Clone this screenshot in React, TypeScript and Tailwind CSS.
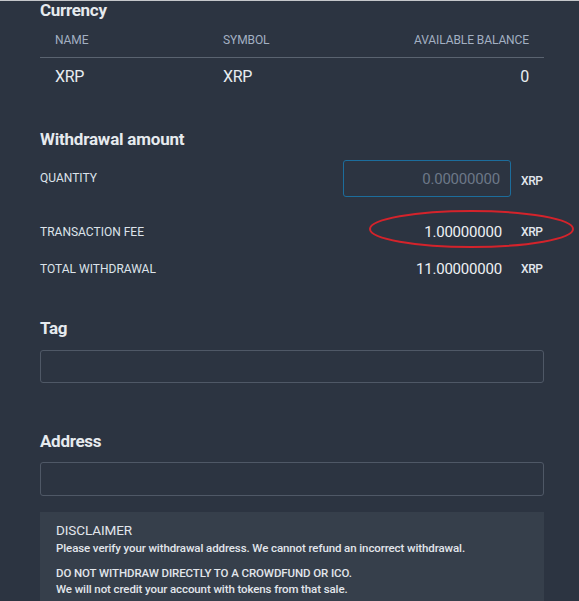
import React from "react";

const font = { fontFamily: "Roboto, 'Noto Sans', sans-serif" };

function AmountRow({ label, value }: { label: string; value: string }) {
  return (
    <div className="flex items-center">
      <span className="flex-1 text-[12px] text-[#dde3ea]">{label}</span>
      <span className="pr-[9px] text-[15px] tracking-[-0.2px] text-[#eef1f4]">{value}</span>
      <span className="w-[33px] pl-[10px] text-[12px] font-medium tracking-[-0.4px] text-[#e2e7ec]">XRP</span>
    </div>
  );
}

export default function App() {
  return (
    <div className="h-[601px] w-[579px] overflow-hidden border-t border-[#c5c7ca] bg-[#2c3441]" style={font}>
      <div className="pl-10 pr-[35px]">
        {/* currency table */}
        <h2 className="mt-[-1px] text-[17px] font-bold leading-5 tracking-[-0.3px] text-[#e6eaee]">Currency</h2>
        <div className="mt-[12px] flex border-b border-[#5a6370] px-[15px] pb-[9px] text-[12px] leading-4 tracking-[-0.1px] text-[#a3b0c2]">
          <span className="w-[168px]">NAME</span>
          <span className="flex-1">SYMBOL</span>
          <span>AVAILABLE BALANCE</span>
        </div>
        <div className="flex px-[15px] pt-[9px] text-[16px] leading-5 tracking-[-0.3px] text-[#e8ecf0]">
          <span className="w-[168px]">XRP</span>
          <span className="flex-1">XRP</span>
          <span>0</span>
        </div>

        {/* withdrawal amount */}
        <h2 className="mt-[42px] text-[17px] font-bold leading-5 tracking-[-0.2px] text-[#e6eaee]">Withdrawal amount</h2>
        <div className="mt-[11px] flex items-center">
          <span className="flex-1 self-start pt-[9px] text-[12px] text-[#dde3ea]">QUANTITY</span>
          <input
            readOnly
            placeholder="0.00000000"
            className="h-[37px] w-[168px] rounded-[3px] border border-[#1c6d9c] bg-transparent pl-2 pr-[10px] text-right text-[15px] tracking-[-0.2px] text-[#e8ecf0] outline-none placeholder:text-[#6c7888]"
          />
          <span className="w-[33px] pl-[10px] pt-[4px] text-[12px] font-medium tracking-[-0.4px] text-[#e2e7ec]">XRP</span>
        </div>
        <div className="relative mt-[24px]">
          <AmountRow label="TRANSACTION FEE" value="1.00000000" />
          {/* hand-drawn highlight */}
          <svg className="pointer-events-none absolute left-[328px] top-[-12px]" width="210" height="42" viewBox="0 0 210 42">
            <ellipse cx="103.5" cy="20" rx="101.5" ry="18" fill="none" stroke="#d4232b" strokeWidth="2" />
          </svg>
        </div>
        <div className="mt-[14px]">
          <AmountRow label="TOTAL WITHDRAWAL" value="11.00000000" />
        </div>

        {/* tag */}
        <h2 className="mt-[38px] text-[17px] font-bold leading-5 tracking-[-0.3px] text-[#e6eaee]">Tag</h2>
        <input readOnly className="mt-[12px] block h-[33px] w-full rounded-[3px] border border-[#4f5866] bg-transparent outline-none" />

        {/* address */}
        <h2 className="mt-[48px] text-[17px] font-bold leading-5 tracking-[-0.3px] text-[#e6eaee]">Address</h2>
        <input readOnly className="mt-[11px] block h-[34px] w-full rounded-[3px] border border-[#4f5866] bg-transparent outline-none" />

        {/* disclaimer */}
        <div className="mt-[16px] h-[120px] bg-[#363f4b] px-4 pt-[10px] text-[#e2e6eb]">
          <div className="text-[13.5px] leading-4 tracking-[-0.1px]">DISCLAIMER</div>
          <p className="mt-[2px] text-[11.5px] font-medium leading-4 tracking-[-0.1px]">
            Please verify your withdrawal address. We cannot refund an incorrect withdrawal.
          </p>
          <p className="mt-[9px] text-[11.5px] font-medium leading-4 tracking-[-0.1px]">
            DO NOT WITHDRAW DIRECTLY TO A CROWDFUND OR ICO.
            <br />
            We will not credit your account with tokens from that sale.
          </p>
        </div>
      </div>
    </div>
  );
}
